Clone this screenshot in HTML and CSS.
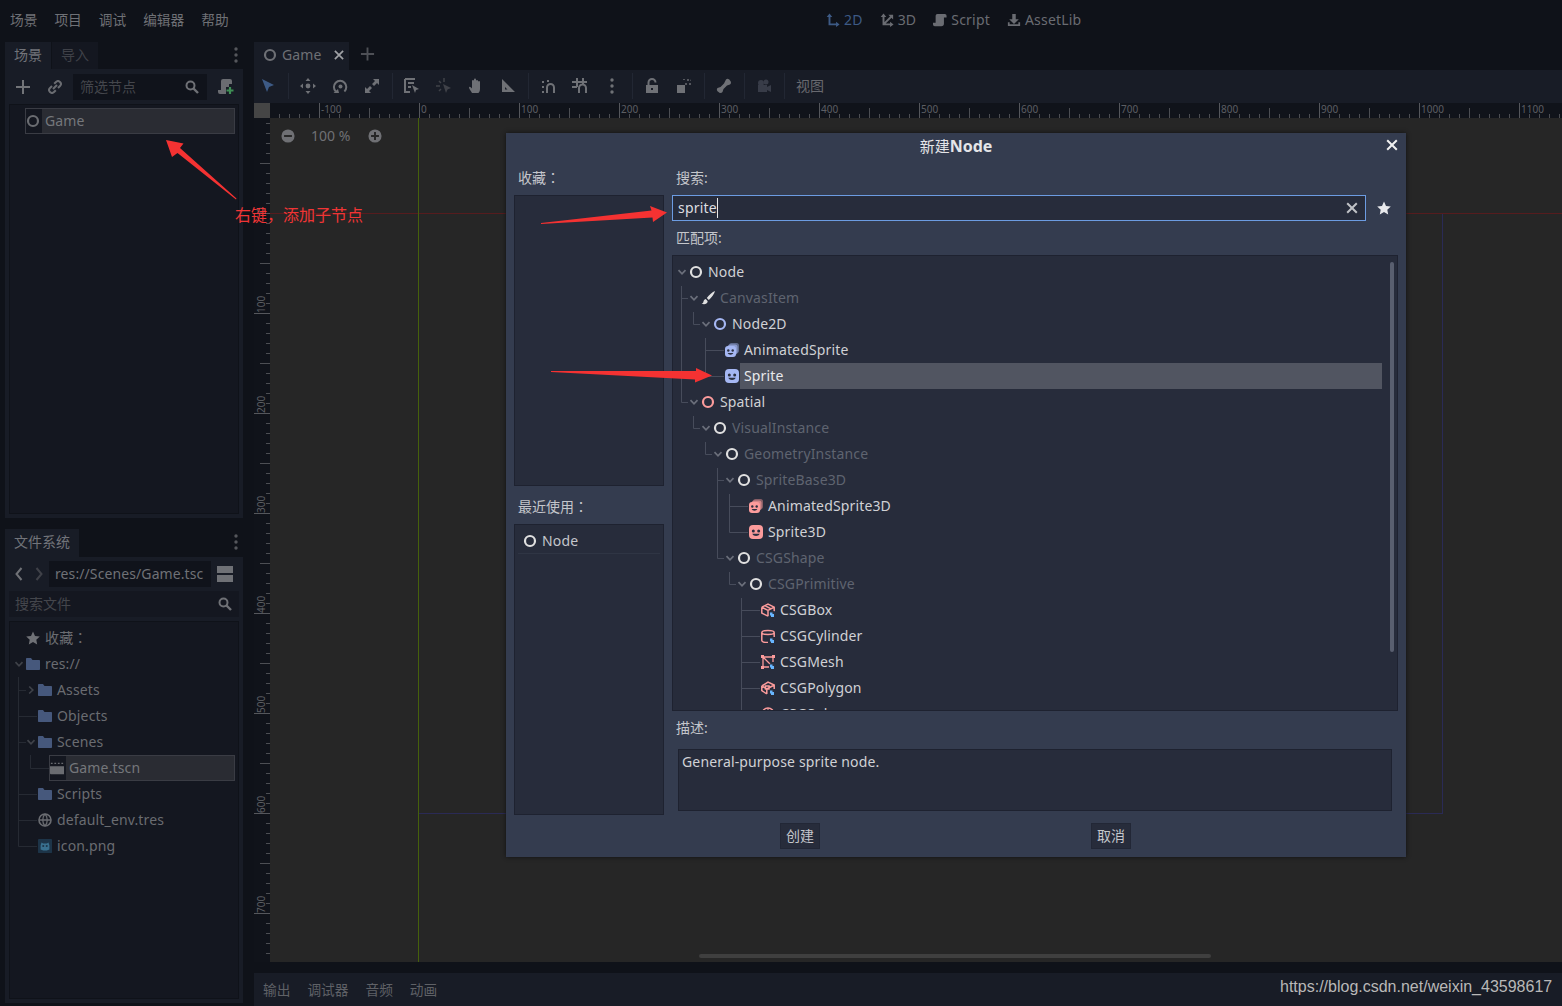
FILE: index.html
```html
<!DOCTYPE html>
<html lang="zh">
<head>
<meta charset="utf-8">
<title>Godot</title>
<link rel="stylesheet" href="styles.css">
</head>
<body>
<svg class="defs" width="0" height="0">
  <symbol id="i-node" viewBox="0 0 14 14"><circle cx="7" cy="7" r="5" fill="none" stroke="currentColor" stroke-width="2.200"/></symbol>
  <symbol id="i-chev" viewBox="0 0 10 10"><path d="M1.500 3.200 5 6.800 8.500 3.200" fill="none" stroke="currentColor" stroke-width="1.700"/></symbol>
  <symbol id="i-chevr" viewBox="0 0 10 10"><path d="M3.200 1.500 6.800 5 3.200 8.500" fill="none" stroke="currentColor" stroke-width="1.700"/></symbol>
  <symbol id="i-brush" viewBox="0 0 14 14"><path d="M14 0c-2.500 1-6 4-8.200 7l2 1.900C10.500 6.800 13.400 3 14 0zM4.800 8C3 8.200 2.600 10 2.300 11.200 2.100 12 1.200 12.300.4 12.600c2.400 1 5.800 .9 6.300-2.400z" fill="currentColor"/></symbol>
  <symbol id="i-sprite" viewBox="0 0 14 14"><rect x="0" y="0" width="14" height="14" rx="4" fill="currentColor"/><circle cx="4.300" cy="6" r="1.500" fill="#2b3040"/><circle cx="9.700" cy="6" r="1.500" fill="#2b3040"/><path d="M3.300 8.800c1.200 3 6.200 3 7.400 0z" fill="#2b3040"/></symbol>
  <symbol id="i-anim" viewBox="0 0 14 14"><rect x="4" y="0" width="10" height="10" rx="2.500" fill="currentColor" opacity=".45"/><rect x="2.500" y="1.500" width="10" height="10" rx="2.500" fill="currentColor" opacity=".65"/><rect x="0" y="3" width="11" height="11" rx="3" fill="currentColor"/><circle cx="3.300" cy="7.500" r="1.200" fill="#2b3040"/><circle cx="7.700" cy="7.500" r="1.200" fill="#2b3040"/><path d="M2.700 10c.9 2.200 4.700 2.200 5.600 0z" fill="#2b3040"/></symbol>
  <symbol id="i-box" viewBox="0 0 14 14"><path d="M.8 4.200 7 1l6.200 3.200v4M.8 4.200v5.900L7 13.200M.8 4.200 7 7.400v5.800M7 7.400l6.200-3.200M3.900 2.600l6.200 3.200" fill="none" stroke="#fc9c9c" stroke-width="1.500"/><circle cx="11" cy="11" r="3" fill="#2b3040"/><path d="M9 9.500h2.500V11H13v3h-3v-1.500H9z" fill="#68b6ff"/></symbol>
  <symbol id="i-cyl" viewBox="0 0 14 14"><path d="M.8 3.500C.8 .8 13.200 .8 13.200 3.500V8M.8 3.500c0 2.600 12.400 2.600 12.400 0M.8 3.500v8c0 1.500 3 2 6.200 2" fill="none" stroke="#fc9c9c" stroke-width="1.500"/><circle cx="11" cy="11" r="3" fill="#2b3040"/><path d="M9 9.500h2.500V11H13v3h-3v-1.500H9z" fill="#68b6ff"/></symbol>
  <symbol id="i-mesh" viewBox="0 0 14 14"><path d="M2 2h10M2 2v10M2 2l8 8M12 2v5M2 12h6" fill="none" stroke="#fc9c9c" stroke-width="1.300"/><g fill="#fc9c9c"><rect x="0" y="0" width="3" height="3"/><rect x="11" y="0" width="3" height="3"/><rect x="0" y="11" width="3" height="3"/></g><circle cx="11" cy="11" r="3" fill="#2b3040"/><path d="M9 9.500h2.500V11H13v3h-3v-1.500H9z" fill="#68b6ff"/></symbol>
  <symbol id="i-poly" viewBox="0 0 14 14"><path d="M.8 5 7 1l6.200 3v4M.8 5v4.500l5 3.500M.8 5l5 3v5M5.800 8l7.400-4M4.500 5h3.500v3H4.500z" fill="none" stroke="#fc9c9c" stroke-width="1.500"/><circle cx="11" cy="11" r="3" fill="#2b3040"/><path d="M9 9.500h2.500V11H13v3h-3v-1.500H9z" fill="#68b6ff"/></symbol>
  <symbol id="i-sphere" viewBox="0 0 14 14"><circle cx="7" cy="7" r="6" fill="none" stroke="#fc9c9c" stroke-width="1.500"/><path d="M7 1v12M1 7h12" stroke="#fc9c9c"/></symbol>
  <symbol id="i-folder" viewBox="0 0 14 14"><path d="M0 2c0-.6.400-1 1-1h4l1.500 2H13c.6 0 1 .4 1 1v8c0 .6-.4 1-1 1H1c-.6 0-1-.4-1-1z" fill="currentColor"/></symbol>
  <symbol id="i-star" viewBox="0 0 14 14"><path d="M7 .5l2 4.400 4.800.6-3.500 3.200.9 4.800L7 11.100l-4.200 2.400.9-4.800L.2 5.500 5 4.900z" fill="currentColor"/></symbol>
  <symbol id="i-x" viewBox="0 0 14 14"><path d="M2.200 2.200 11.800 11.800M11.800 2.200 2.200 11.800" stroke="currentColor" stroke-width="2" fill="none"/></symbol>
  <symbol id="i-plus" viewBox="0 0 16 16"><path d="M8 1v14M1 8h14" stroke="currentColor" stroke-width="2" fill="none"/></symbol>
  <symbol id="i-search" viewBox="0 0 14 14"><circle cx="5.500" cy="5.500" r="4" fill="none" stroke="currentColor" stroke-width="2"/><path d="M8.500 8.500 13 13" stroke="currentColor" stroke-width="2.400"/></symbol>
  <symbol id="i-link" viewBox="0 0 14 14"><path d="M6.200 3.800 8 2a2.800 2.800 0 0 1 4 4l-2 2M7.800 10.200 6 12a2.800 2.800 0 0 1-4-4l2-2M5 9l4-4" fill="none" stroke="currentColor" stroke-width="2"/></symbol>
  <symbol id="i-dots" viewBox="0 0 4 16"><circle cx="2" cy="2" r="1.700" fill="currentColor"/><circle cx="2" cy="8" r="1.700" fill="currentColor"/><circle cx="2" cy="14" r="1.700" fill="currentColor"/></symbol>
  <symbol id="i-addscript" viewBox="0 0 16 16"><path d="M5 0h7a2 2 0 0 1 2 2v3h-3v3H8v7H2a2 2 0 0 1-2-2v-2h3V2a2 2 0 0 1 2-2z" fill="currentColor"/><path d="M12 8v7M8.500 11.500h7" stroke="#3f8f55" stroke-width="2.200"/></symbol>
  <symbol id="i-2d" viewBox="0 0 16 16"><path d="M4 14V3M4 13h9" fill="none" stroke="currentColor" stroke-width="2.200"/><path d="M4 .5 7.200 4.500H.8zM15.500 13 11.500 16V10z" fill="currentColor"/></symbol>
  <symbol id="i-3d" viewBox="0 0 16 16"><path d="M4 14V3M4 13h9M4 13l9-9" fill="none" stroke="currentColor" stroke-width="2.200"/><path d="M4 .5 7.200 4.500H.8zM15.500 13 11.500 16V10zM15 2v5.500L9.500 2z" fill="currentColor"/></symbol>
  <symbol id="i-script" viewBox="0 0 16 16"><path d="M5 1h8.500a2 2 0 0 1 2 2v2h-3v7a3 3 0 0 1-3 3H2a2 2 0 0 1-2-2v-2h3V3a2 2 0 0 1 2-2z" fill="currentColor"/></symbol>
  <symbol id="i-asset" viewBox="0 0 16 16"><path d="M6 1h4v6h3.500L8 12.500 2.500 7H6zM1 10.500v4.300h14v-4.300h-2v2.300H3v-2.300z" fill="currentColor"/></symbol>
  <symbol id="i-select" viewBox="0 0 16 16"><path d="M2 1l5 13 2-5 5-2z" fill="currentColor"/></symbol>
  <symbol id="i-move" viewBox="0 0 16 16"><path d="M8 0l2.500 3h-5zM8 16l-2.500-3h5zM0 8l3-2.500v5zM16 8l-3 2.500v-5z" fill="currentColor"/><circle cx="8" cy="8" r="2.400" fill="currentColor"/></symbol>
  <symbol id="i-rotate" viewBox="0 0 16 16"><path d="M3.800 13.500a6.200 6.200 0 1 1 8.600 0" fill="none" stroke="currentColor" stroke-width="2"/><circle cx="8.500" cy="8.500" r="2" fill="currentColor"/><path d="M1.500 15h5.500l-1-4z" fill="currentColor"/></symbol>
  <symbol id="i-scale" viewBox="0 0 16 16"><path d="M9 1h6v6l-2-2-3 3-2-2 3-3zM7 15H1V9l2 2 3-3 2 2-3 3z" fill="currentColor"/></symbol>
  <symbol id="i-list" viewBox="0 0 16 16"><path d="M1 1h10M1 1v13h5M4 5h6M4 9h3" fill="none" stroke="currentColor" stroke-width="2"/><path d="M8 7l3 8 1-3 3-1z" fill="currentColor"/></symbol>
  <symbol id="i-pivot" viewBox="0 0 16 16"><path d="M8 0v4M0 8h4M3 3l2 2M3 13l2-2" stroke="currentColor" stroke-width="1.500" fill="none"/><path d="M7 6l3 9 1.500-3.500L15 10z" fill="currentColor"/></symbol>
  <symbol id="i-hand" viewBox="0 0 16 16"><path d="M4 15c-1-2-3-4-3-5.500 0-1 1-1 2 0l1 1V3a1 1 0 0 1 2 0V1.500a1 1 0 0 1 2 0V3a1 1 0 0 1 2 0v1a1 1 0 0 1 2 0v7c0 2-1 4-2 4z" fill="currentColor"/></symbol>
  <symbol id="i-ruler" viewBox="0 0 16 16"><path d="M2 1l13 13H2zM5 9v2.500h2.500z" fill="currentColor" fill-rule="evenodd"/></symbol>
  <symbol id="i-snap" viewBox="0 0 16 16"><path d="M7 15V9.500a3.500 3.500 0 0 1 7 0V15" fill="none" stroke="currentColor" stroke-width="2"/><path d="M2 3h2v2H2zM2 8h2v2H2zM2 13h2v2H2zM7 2h2v2H7z" fill="currentColor"/></symbol>
  <symbol id="i-snapgrid" viewBox="0 0 16 16"><path d="M7 15V10a3.500 3.500 0 0 1 7 0v5M0 4h15M0 9h5M5 0v9M11 0v6" fill="none" stroke="currentColor" stroke-width="2"/></symbol>
  <symbol id="i-lock" viewBox="0 0 16 16"><path d="M2 7h12v8H2zM7 10v2h2v-2z" fill="currentColor" fill-rule="evenodd"/><path d="M4.500 7V4.500a3.500 3.500 0 0 1 7 0" fill="none" stroke="currentColor" stroke-width="2"/></symbol>
  <symbol id="i-group" viewBox="0 0 16 16"><path d="M1 7h8v8H1z" fill="currentColor"/><path d="M7 2V1h2v1zM11 1h2v2h-2zM15 1v2h-1M15 5v2h-2V5zM11 7h-2V5h2z" fill="currentColor" opacity=".7"/></symbol>
  <symbol id="i-bone" viewBox="0 0 16 16"><path d="M10 1.500a2.500 2.500 0 0 1 4 1 2.500 2.500 0 0 1 0 4L11 7.500 7.500 11 6.500 14a2.500 2.500 0 0 1-4 0 2.500 2.500 0 0 1-1-4l3-1L8 5.500z" fill="currentColor"/></symbol>
  <symbol id="i-camera" viewBox="0 0 16 16"><circle cx="5" cy="5" r="3" fill="currentColor"/><circle cx="10" cy="4" r="2.500" fill="currentColor"/><path d="M2 7h9v7H2zM11 9l4-2v7l-4-2z" fill="currentColor"/></symbol>
  <symbol id="i-zminus" viewBox="0 0 16 16"><circle cx="8" cy="8" r="7.500" fill="currentColor"/><path d="M3.500 8h9" stroke="#262626" stroke-width="2.200"/></symbol>
  <symbol id="i-zplus" viewBox="0 0 16 16"><circle cx="8" cy="8" r="7.500" fill="currentColor"/><path d="M3.500 8h9M8 3.500v9" stroke="#262626" stroke-width="2.200"/></symbol>
  <symbol id="i-left" viewBox="0 0 10 16"><path d="M7.500 2 2.500 8l5 6" fill="none" stroke="currentColor" stroke-width="2"/></symbol>
  <symbol id="i-right" viewBox="0 0 10 16"><path d="M2.500 2l5 6-5 6" fill="none" stroke="currentColor" stroke-width="2"/></symbol>
  <symbol id="i-split" viewBox="0 0 16 16"><path d="M0 0h16v7H0zM0 9h16v7H0z" fill="currentColor"/></symbol>
  <symbol id="i-clap" viewBox="0 0 16 16"><path d="M0 6h16v9H1a1 1 0 0 1-1-1z" fill="currentColor"/><path d="M1 2h2v1.500H1zM5 2h2v1.500H5zM9 2h2v1.500H9zM13 2h2v1.500h-2z" fill="currentColor"/></symbol>
  <symbol id="i-globe" viewBox="0 0 14 14"><circle cx="7" cy="7" r="6" fill="none" stroke="currentColor" stroke-width="1.600"/><path d="M1 7h12M7 1c-3 3-3 9 0 12M7 1c3 3 3 9 0 12" fill="none" stroke="currentColor" stroke-width="1.300"/></symbol>
  <symbol id="i-png" viewBox="0 0 16 16"><rect width="16" height="16" rx="1" fill="#1d3448"/><path d="M3 7l1-3 2 1h4l2-1 1 3v5l-3 1H6l-3-1z" fill="#39708f"/><circle cx="6" cy="8" r="1.200" fill="#1d3448"/><circle cx="10" cy="8" r="1.200" fill="#1d3448"/></symbol>
</svg>

<header class="menubar">
  <nav class="menus"><span>场景</span><span>项目</span><span>调试</span><span>编辑器</span><span>帮助</span></nav>
  <nav class="modes">
    <span class="mode on"><svg class="ic14"><use href="#i-2d"/></svg>2D</span>
    <span class="mode"><svg class="ic14"><use href="#i-3d"/></svg>3D</span>
    <span class="mode"><svg class="ic14"><use href="#i-script"/></svg>Script</span>
    <span class="mode"><svg class="ic14"><use href="#i-asset"/></svg>AssetLib</span>
  </nav>
</header>

<main class="workspace">
  <div class="leftcol">
    <section class="dock dock-scene">
      <div class="tabs">
        <span class="tab on t-46">场景</span><span class="tab off t-46">导入</span>
        <svg class="dock-dots"><use href="#i-dots"/></svg>
      </div>
      <div class="panel">
        <div class="scene-tools">
          <svg class="ic16 tool-plus"><use href="#i-plus"/></svg>
          <svg class="ic14 tool-link"><use href="#i-link"/></svg>
          <div class="filter"><span>筛选节点</span><svg class="ic14"><use href="#i-search"/></svg></div>
          <svg class="ic16 tool-add"><use href="#i-addscript"/></svg>
        </div>
        <div class="tree dark-tree">
          <div class="row dim l0">
            <span class="chev"></span>
            <div class="selbox"><span class="selicon"><svg class="ic14"><use href="#i-node"/></svg></span><span class="sellabel">Game</span></div>
          </div>
        </div>
      </div>
    </section>
    <section class="dock dock-fs">
      <div class="tabs tabs-fs">
        <span class="tab on t-74">文件系统</span>
        <svg class="dock-dots"><use href="#i-dots"/></svg>
      </div>
      <div class="panel">
        <div class="fs-nav">
          <svg class="nav-arrow"><use href="#i-left"/></svg>
          <svg class="nav-arrow faint"><use href="#i-right"/></svg>
          <div class="path">res://Scenes/Game.tsc</div>
          <svg class="ic16 split"><use href="#i-split"/></svg>
        </div>
        <div class="fs-search"><span>搜索文件</span><svg class="ic14"><use href="#i-search"/></svg></div>
        <div class="tree dark-tree fs-tree">
          <svg class="lines" width="230" height="240"><path d="M8.500 55V224.500H27M8.500 68.500H16M8.500 94.500H27M8.500 120.500H16M8.500 172.500H27M8.500 198.500H27M20.500 133V146.500H39" fill="none" stroke="#262a33"/></svg>
          <div class="row dim l0"><span class="chev"></span><svg class="ic14 faintstar"><use href="#i-star"/></svg><span class="lab">收藏<span class="cc" lang="zh-TW">：</span></span></div>
          <div class="row dim l0"><svg class="chev ic-ch"><use href="#i-chev"/></svg><svg class="ic14 folder"><use href="#i-folder"/></svg><span class="lab">res://</span></div>
          <div class="row dim l1"><svg class="chev ic-ch"><use href="#i-chevr"/></svg><svg class="ic14 folder"><use href="#i-folder"/></svg><span class="lab">Assets</span></div>
          <div class="row dim l1"><span class="chev"></span><svg class="ic14 folder"><use href="#i-folder"/></svg><span class="lab">Objects</span></div>
          <div class="row dim l1"><svg class="chev ic-ch"><use href="#i-chev"/></svg><svg class="ic14 folder"><use href="#i-folder"/></svg><span class="lab">Scenes</span></div>
          <div class="row dim l2"><span class="chev"></span>
            <div class="selbox"><span class="selicon"><svg class="ic14"><use href="#i-clap"/></svg></span><span class="sellabel">Game.tscn</span></div>
          </div>
          <div class="row dim l1"><span class="chev"></span><svg class="ic14 folder"><use href="#i-folder"/></svg><span class="lab">Scripts</span></div>
          <div class="row dim l1"><span class="chev"></span><svg class="ic14"><use href="#i-globe"/></svg><span class="lab">default_env.tres</span></div>
          <div class="row dim l1"><span class="chev"></span><svg class="ic14"><use href="#i-png"/></svg><span class="lab">icon.png</span></div>
        </div>
      </div>
    </section>
  </div>

  <div class="rightcol">
    <div class="scene-tabs">
      <span class="scene-tab"><svg class="ic14"><use href="#i-node"/></svg>Game<svg class="ic12"><use href="#i-x"/></svg></span>
      <svg class="ic16 scene-add"><use href="#i-plus"/></svg>
    </div>
    <div class="toolbar">
      <span class="tb tb-first tb-on"><svg class="ic16"><use href="#i-select"/></svg></span><i class="sep"></i>
      <span class="tb"><svg class="ic16"><use href="#i-move"/></svg></span>
      <span class="tb"><svg class="ic16"><use href="#i-rotate"/></svg></span>
      <span class="tb"><svg class="ic16"><use href="#i-scale"/></svg></span><i class="sep"></i>
      <span class="tb"><svg class="ic16"><use href="#i-list"/></svg></span>
      <span class="tb tb-faint"><svg class="ic16"><use href="#i-pivot"/></svg></span>
      <span class="tb"><svg class="ic16"><use href="#i-hand"/></svg></span>
      <span class="tb"><svg class="ic16"><use href="#i-ruler"/></svg></span><i class="sep"></i>
      <span class="tb"><svg class="ic16"><use href="#i-snap"/></svg></span>
      <span class="tb"><svg class="ic16"><use href="#i-snapgrid"/></svg></span>
      <span class="tb"><svg class="tb-dots"><use href="#i-dots"/></svg></span><i class="sep"></i>
      <span class="tb"><svg class="ic16"><use href="#i-lock"/></svg></span>
      <span class="tb"><svg class="ic16"><use href="#i-group"/></svg></span><i class="sep"></i>
      <span class="tb"><svg class="ic16"><use href="#i-bone"/></svg></span><i class="sep"></i>
      <span class="tb tb-cam"><svg class="ic16"><use href="#i-camera"/></svg></span><i class="sep"></i>
      <span class="tb-text">视图</span>
    </div>
    <div class="viewport">
      <div class="corner"></div>
      <div class="ruler-h">
        <span>-100</span><span>0</span><span>100</span><span>200</span><span>300</span><span>400</span><span>500</span><span>600</span><span>700</span><span>800</span><span>900</span><span>1000</span><span>1100</span>
      </div>
      <div class="ruler-v">
        <span>0</span><span>100</span><span>200</span><span>300</span><span>400</span><span>500</span><span>600</span><span>700</span>
      </div>
      <div class="canvas">
        <i class="axis-x"></i><i class="axis-y"></i><i class="frame"></i>
        <div class="zoomctl"><svg class="ic14"><use href="#i-zminus"/></svg><span>100 %</span><svg class="ic14"><use href="#i-zplus"/></svg></div>
        <i class="hscroll"></i>
      </div>
    </div>
    <div class="bottom"><span>输出</span><span>调试器</span><span>音频</span><span>动画</span></div>
  </div>
</main>

<section class="modal">
  <div class="modal-title">新建<b>Node</b><svg class="ic14 modal-x"><use href="#i-x"/></svg></div>
  <div class="modal-body">
    <div class="m-left">
      <div class="m-label">收藏<span class="cc" lang="zh-TW">：</span></div>
      <div class="m-box"></div>
      <div class="m-label m-label2">最近使用<span class="cc" lang="zh-TW">：</span></div>
      <div class="m-box">
        <div class="recent"><svg class="ic14 c-node"><use href="#i-node"/></svg><span>Node</span></div>
      </div>
    </div>
    <div class="m-right">
      <div class="m-label">搜索:</div>
      <div class="searchrow">
        <div class="input"><span class="caret">sprite</span><svg class="ic14 clear"><use href="#i-x"/></svg></div>
        <svg class="ic14 fav"><use href="#i-star"/></svg>
      </div>
      <div class="m-label m-label3">匹配项:</div>
      <div class="tree m-tree">
        <svg class="lines" width="726" height="456"><path d="M8.500 30V146.500H15M8.500 42.500H15M20.500 56V68.500H27M32.500 82V120.500H51M32.500 94.500H51M20.500 160V172.500H27M32.500 186V198.500H39M44.500 212V302.500H51M44.500 224.500H51M56.500 238V276.500H75M56.500 250.500H75M56.500 316V328.500H63M68.500 342V460M68.500 354.500H87M68.500 380.500H87M68.500 406.500H87M68.500 432.500H87M68.500 458.500H87" fill="none" stroke="#474c5b"/></svg>
        <div class="mscroll"></div>
        <div class="row l0"><svg class="chev ic-ch"><use href="#i-chev"/></svg><svg class="ic14 c-node"><use href="#i-node"/></svg><span class="lab">Node</span></div>
        <div class="row l1 off"><svg class="chev ic-ch"><use href="#i-chev"/></svg><svg class="ic14 c-node"><use href="#i-brush"/></svg><span class="lab">CanvasItem</span></div>
        <div class="row l2"><svg class="chev ic-ch"><use href="#i-chev"/></svg><svg class="ic14 c-2d"><use href="#i-node"/></svg><span class="lab">Node2D</span></div>
        <div class="row l3"><span class="chev"></span><svg class="ic14 c-2d"><use href="#i-anim"/></svg><span class="lab">AnimatedSprite</span></div>
        <div class="row l3"><span class="chev"></span><svg class="ic14 c-2d"><use href="#i-sprite"/></svg><span class="lab hl">Sprite</span></div>
        <div class="row l1"><svg class="chev ic-ch"><use href="#i-chev"/></svg><svg class="ic14 c-3d"><use href="#i-node"/></svg><span class="lab">Spatial</span></div>
        <div class="row l2 off"><svg class="chev ic-ch"><use href="#i-chev"/></svg><svg class="ic14 c-node"><use href="#i-node"/></svg><span class="lab">VisualInstance</span></div>
        <div class="row l3 off"><svg class="chev ic-ch"><use href="#i-chev"/></svg><svg class="ic14 c-node"><use href="#i-node"/></svg><span class="lab">GeometryInstance</span></div>
        <div class="row l4 off"><svg class="chev ic-ch"><use href="#i-chev"/></svg><svg class="ic14 c-node"><use href="#i-node"/></svg><span class="lab">SpriteBase3D</span></div>
        <div class="row l5"><span class="chev"></span><svg class="ic14 c-3d"><use href="#i-anim"/></svg><span class="lab">AnimatedSprite3D</span></div>
        <div class="row l5"><span class="chev"></span><svg class="ic14 c-3d"><use href="#i-sprite"/></svg><span class="lab">Sprite3D</span></div>
        <div class="row l4 off"><svg class="chev ic-ch"><use href="#i-chev"/></svg><svg class="ic14 c-node"><use href="#i-node"/></svg><span class="lab">CSGShape</span></div>
        <div class="row l5 off"><svg class="chev ic-ch"><use href="#i-chev"/></svg><svg class="ic14 c-node"><use href="#i-node"/></svg><span class="lab">CSGPrimitive</span></div>
        <div class="row l6"><span class="chev"></span><svg class="ic14"><use href="#i-box"/></svg><span class="lab">CSGBox</span></div>
        <div class="row l6"><span class="chev"></span><svg class="ic14"><use href="#i-cyl"/></svg><span class="lab">CSGCylinder</span></div>
        <div class="row l6"><span class="chev"></span><svg class="ic14"><use href="#i-mesh"/></svg><span class="lab">CSGMesh</span></div>
        <div class="row l6"><span class="chev"></span><svg class="ic14"><use href="#i-poly"/></svg><span class="lab">CSGPolygon</span></div>
        <div class="row l6"><span class="chev"></span><svg class="ic14"><use href="#i-sphere"/></svg><span class="lab">CSGSphere</span></div>
      </div>
      <div class="m-label m-label4">描述:</div>
      <div class="desc">General-purpose sprite node.</div>
    </div>
  </div>
  <div class="modal-foot"><span class="btn btn-create">创建</span><span class="btn btn-cancel">取消</span></div>
</section>

<svg class="arrows" width="1562" height="1006">
  <polygon points="166,140 183.500,143.500 180,148 236.500,198.500 236,199.500 177.500,153 172,157"/>
  <polygon points="667,212.500 650,206 651.500,210.500 541,223 541,224 652.500,217.500 653,222"/>
  <polygon points="712,375.500 696,368 696,371 551,371 551,372 695,379.500 695,382.500"/>
</svg>
<div class="note">右键，添加子节点</div>
<div class="watermark">https://blog.csdn.net/weixin_43598617</div>
</body>
</html>
```

FILE: styles.css
```css
* { box-sizing: border-box; }
html, body { margin: 0; height: 100%; overflow: hidden; }
body {
  position: relative;
  background: #0f1219;
  color: #6f7176;
  font: 14px/20px "Noto Sans", "Noto Sans CJK SC", sans-serif;
}
svg { display: block; flex: none; }
.defs { position: absolute; }
.ic12 { width: 12px; height: 12px; }
.ic14 { width: 14px; height: 14px; }
.ic16 { width: 16px; height: 16px; }
.cc { font-family: "Noto Sans CJK TC", sans-serif; line-height: 0; }

/* menu bar */
.menubar { display: flex; align-items: center; height: 40px; padding-left: 1.500px; }
.menus { display: flex; width: 824.500px; font-size: 13.700px; }
.menus span { padding: 0 8.500px; }
.modes { display: flex; gap: 17px; letter-spacing: 0.200px; }
.mode { display: flex; align-items: center; gap: 4px; color: #6a6c72; }
.mode.on { color: #3d5a85; }

/* workspace */
.workspace {
  display: grid;
  grid-template-columns: 238px 1308px;
  column-gap: 11px;
  height: 966px;
  padding: 2px 0 0 5px;
}
.leftcol { display: flex; flex-direction: column; gap: 11px; height: 961px; }
.dock { display: flex; flex-direction: column; }
.dock-scene { height: 476px; }
.dock-fs { height: 474px; }
.tabs { position: relative; display: flex; height: 27px; flex: none; }
.tabs-fs { height: 28px; }
.tab { display: flex; align-items: center; justify-content: center; padding-bottom: 2px; }
.tab.on { background: #181c26; color: #72747a; }
.tab.off { background: #141720; color: #3f4148; margin-left: 1px; }
.t-46 { width: 46px; }
.t-74 { width: 74px; }
.dock-dots { position: absolute; right: 5px; top: 5px; width: 4px; height: 16px; color: #55575c; }
.panel {
  flex: 1;
  display: flex;
  flex-direction: column;
  min-height: 0;
  background: #181c26;
  padding: 4px;
}

/* scene dock */
.scene-tools { display: flex; align-items: center; height: 26px; margin: 1px 0 4px; flex: none; color: #727478; }
.tool-plus { margin-left: 6px; }
.tool-link { margin-left: 17px; color: #6a6c71; }
.filter {
  display: flex;
  align-items: center;
  justify-content: space-between;
  width: 134px;
  height: 26px;
  margin-left: 11px;
  padding: 0 8px 0 7px;
  background: #10131b;
  color: #44464c;
}
.filter svg { color: #6f7176; }
.tool-add { margin-left: 11px; color: #6a6c71; }

.tree { position: relative; flex: 1; min-height: 0; overflow: hidden; padding-top: 3px; border: 1px solid #0f1219; }
.dark-tree { background: #141720; }
.lines { position: absolute; left: 0; top: 0; }
.row { position: relative; display: flex; align-items: center; height: 26px; }
.l0 { padding-left: 3px; }
.l1 { padding-left: 15px; }
.l2 { padding-left: 27px; }
.l3 { padding-left: 39px; }
.l4 { padding-left: 51px; }
.l5 { padding-left: 63px; }
.l6 { padding-left: 75px; }
.chev { width: 13px; height: 10px; flex: none; }
.ic-ch { padding: 0 2px 0 1px; color: #6b6f7b; }
.dim .ic-ch { color: #3f4249; }
.lab { margin-left: 5px; white-space: nowrap; letter-spacing: 0.150px; }
.dim { color: #6a6c71; }
.dim .lab { color: #6a6c71; }
.folder { color: #46587c; }
.faintstar { color: #6f7176; }
.selbox {
  flex: 1;
  display: flex;
  height: 26px;
  margin: 0 3px 0 -1px;
  border: 1px solid #3a3c44;
  background: #2a2c33;
}
.selicon { display: flex; align-items: center; width: 16px; background: #141720; }
.sellabel { padding-left: 3px; line-height: 24px; color: #75777b; letter-spacing: 0.150px; }

/* file system dock */
.fs-nav { display: flex; align-items: center; height: 26px; flex: none; margin-bottom: 4px; color: #6f7176; }
.nav-arrow { width: 10px; height: 16px; margin-left: 5px; }
.nav-arrow.faint { margin-left: 10px; color: #3f4148; }
.path {
  width: 162px;
  height: 26px;
  margin-left: 5px;
  padding: 0 6px;
  background: #10131b;
  line-height: 26px;
  overflow: hidden;
  white-space: nowrap;
  letter-spacing: 0.100px;
}
.split { margin-left: 6px; }
.fs-search {
  display: flex;
  align-items: center;
  justify-content: space-between;
  height: 26px;
  flex: none;
  margin-bottom: 4px;
  padding: 0 7px 0 6px;
  background: #141720;
  color: #44464c;
}
.fs-search svg { color: #6f7176; }

/* right column */
.rightcol { display: flex; flex-direction: column; height: 964px; }
.scene-tabs { display: flex; align-items: center; height: 28px; flex: none; }
.scene-tab {
  display: flex;
  align-items: center;
  width: 95px;
  height: 28px;
  padding: 0 0 3px 9px;
  background: #181c26;
  color: #6e7075;
  letter-spacing: 0.100px;
}
.scene-tab .ic14 { margin-right: 5px; }
.scene-tab .ic12 { margin-left: 12px; color: #a0a2a6; }
.scene-add { width: 15px; margin: 0 0 4px 11px; color: #4e5056; }
.toolbar { display: flex; align-items: center; height: 33px; padding-bottom: 1px; flex: none; background: #181c26; color: #6f7176; }
.tb { display: flex; align-items: center; justify-content: center; width: 32px; height: 32px; }
.tb-first { width: 28px; margin-right: 2px; }
.tb-on { color: #3d5a85; }
.tb-faint { color: #3f4148; }
.tb-cam { color: #383c48; }
.tb-dots { width: 4px; height: 16px; }
.sep { width: 8px; height: 26px; flex: none; background: linear-gradient(#222733, #222733) center / 1px 100% no-repeat; }
.tb-text { padding-left: 8px; color: #68696f; }

.viewport {
  display: grid;
  grid-template-columns: 16px 1fr;
  grid-template-rows: 15px 844px;
  height: 859px;
  flex: none;
  overflow: hidden;
}
.corner { background: #454545; }
.ruler-h {
  display: flex;
  overflow: hidden;
  padding-left: 49px;
  background-color: #10131a;
  background-image:
    linear-gradient(90deg, #55575c 1px, transparent 1px),
    linear-gradient(90deg, #4c4e53 1px, transparent 1px),
    linear-gradient(90deg, #4c4e53 1px, transparent 1px);
  background-size: 100px 15px, 100px 10px, 10px 4px;
  background-position: 49px 0, 99px 5px, 9px 11px;
  background-repeat: repeat-x;
}
.ruler-h span {
  flex: none;
  width: 100px;
  padding-left: 2px;
  font-size: 10px;
  line-height: 13px;
  color: #5c5e63;
}
.ruler-v {
  display: flex;
  flex-direction: column;
  overflow: hidden;
  background-color: #10131a;
  background-image:
    linear-gradient(#55575c 1px, transparent 1px),
    linear-gradient(#4c4e53 1px, transparent 1px),
    linear-gradient(#4c4e53 1px, transparent 1px);
  background-size: 16px 100px, 10px 100px, 4px 10px;
  background-position: 0 95px, 6px 45px, 12px 5px;
  background-repeat: repeat-y;
}
.ruler-v span {
  flex: none;
  display: flex;
  justify-content: flex-start;
  height: 100px;
  padding-right: 1px;
  font-size: 10px;
  line-height: 12px;
  color: #5c5e63;
  writing-mode: vertical-rl;
  transform: rotate(180deg);
}
.ruler-v span:first-child { height: 95px; }
.canvas { position: relative; overflow: hidden; background: #262626; }
.axis-x { position: absolute; left: 0; right: 0; top: 95px; height: 1px; background: #561c1e; }
.axis-y { position: absolute; left: 148px; top: 0; bottom: 0; width: 1px; background: #45600c; }
.frame { position: absolute; left: 149px; top: 96px; width: 1024px; height: 600px; border: solid #2a2a55; border-width: 0 1px 1px 0; }
.zoomctl { position: absolute; left: 11px; top: 11px; display: flex; align-items: center; color: #6f7074; }
.zoomctl span { width: 73px; padding-left: 16px; line-height: 14px; }
.hscroll { position: absolute; left: 429px; top: 836px; width: 512px; height: 4px; border-radius: 2px; background: #3f3f3f; }
.bottom {
  display: flex;
  gap: 17px;
  align-items: center;
  height: 33px;
  flex: none;
  margin-top: 11px;
  padding-left: 9px;
  background: #181c26;
  color: #5f6166;
  font-size: 13.700px;
}

/* modal */
.modal {
  position: absolute;
  left: 506px;
  top: 133px;
  width: 900px;
  height: 724px;
  padding: 0 8px;
  background: #343c4f;
  box-shadow: 0 0 4px #111;
  color: #d8d9dc;
}
.modal-title { position: relative; height: 36px; padding-top: 3px; text-align: center; font-size: 15px; line-height: 20px; color: #e4e5e8; }
.modal-title b { font-size: 16px; font-weight: 700; }
.modal-x { position: absolute; right: -1px; top: 5px; color: #f0f0f0; }
.modal-body { display: grid; grid-template-columns: 150px 726px; column-gap: 8px; height: 646px; }
.m-left, .m-right { display: flex; flex-direction: column; min-height: 0; }
.m-label { height: 18px; margin-bottom: 8px; padding-left: 4px; line-height: 18px; flex: none; color: #c4c6cb; }
.m-label2 { margin-top: 12px; }
.m-label3 { margin-top: 8px; }
.m-label4 { margin-top: 8px; margin-bottom: 12px; }
.m-box { height: 291px; flex: none; background: #272c3b; border: 1px solid #1e2230; padding: 3px; }
.recent { display: flex; align-items: center; height: 26px; padding-left: 5px; border-bottom: 1px solid #2f3544; }
.recent span { margin-left: 5px; color: #c4c6cb; letter-spacing: 0.150px; }
.c-node { color: #e0e0e0; }
.c-2d { color: #a5b7f3; }
.c-3d { color: #fc9c9c; }
.searchrow { display: flex; align-items: center; height: 26px; flex: none; }
.input {
  display: flex;
  align-items: center;
  justify-content: space-between;
  width: 694px;
  height: 26px;
  padding: 0 6px 0 5px;
  background: #272c3b;
  border: 1px solid #6c9ce2;
  color: #dcdde0;
  letter-spacing: 0.200px;
}
.caret { border-right: 1px solid #e8e8e8; line-height: 20px; }
.clear { color: #c0c2c6; }
.fav { margin-left: 11px; color: #e8e9ec; }
.m-tree { height: 456px; flex: none; background: #272c3b; border-color: #1e2230; }
.mscroll { position: absolute; left: 717px; top: 6px; width: 4px; height: 390px; border-radius: 2px; background: #595f6f; }
.m-tree .lab { color: #d0d1d5; }
.m-tree .off .lab { color: #5f6470; }
.m-tree .lab.hl { flex: 1; margin: 0 15px 0 1px; padding-left: 4px; height: 26px; line-height: 26px; background: #515561; color: #e8e9ec; }
.desc {
  height: 62px;
  flex: none;
  margin: 0 6px;
  padding: 2px 3px;
  background: #272c3b;
  border: 1px solid #1e2230;
  color: #d0d1d5;
  letter-spacing: 0.150px;
}
.modal-foot { display: flex; margin-top: 8px; }
.btn {
  display: flex;
  align-items: center;
  justify-content: center;
  width: 40px;
  height: 26px;
  background: #272c3b;
  border: 1px solid #222736;
  color: #c4c6cb;
}
.btn-create { margin-left: 266px; }
.btn-cancel { margin-left: 271px; }

/* annotations on top of the screenshot */
.arrows { position: absolute; left: 0; top: 0; pointer-events: none; }
.arrows polygon { fill: #f43232; }
.note { position: absolute; left: 235px; top: 203px; font-size: 16px; line-height: 22px; color: #f03535; font-family: "Noto Sans CJK SC", sans-serif; }
.watermark { position: absolute; left: 1280px; top: 977px; font: 16px/20px "Liberation Sans", sans-serif; color: #b8b8b8; }
```
